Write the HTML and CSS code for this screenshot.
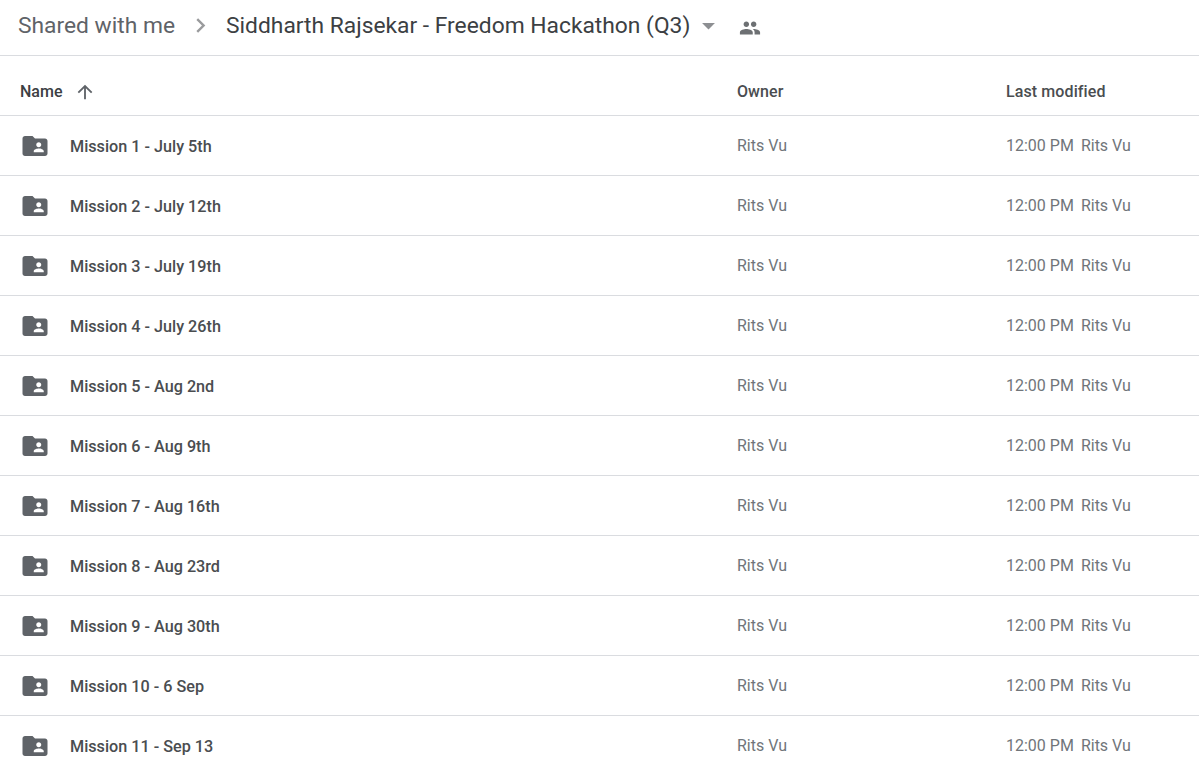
FILE: index.html
```html
<!DOCTYPE html>
<html lang="en">
<head>
  <meta charset="UTF-8" />
  <title>Siddharth Rajsekar - Freedom Hackathon (Q3)</title>
  <link rel="stylesheet" href="styles.css">
</head>

<body>
  <svg class="icon-defs" width="0" height="0">
    <symbol id="shared-folder" viewBox="0 0 24 24">
      <path d="M20 6h-8l-2-2H4c-1.1 0-2 .9-2 2v12c0 1.1.9 2 2 2h16c1.1 0 2-.9 2-2V8c0-1.1-.9-2-2-2zm-5 3c1.1 0 2 .9 2 2s-.9 2-2 2-2-.9-2-2 .9-2 2-2zm4 8h-8v-1c0-1.33 2.67-2 4-2s4 .67 4 2v1z"/>
    </symbol>
  </svg>

  <header class="crumbs">
    <span class="crumb-parent">Shared with me</span>
    <svg class="crumb-sep" viewBox="0 0 24 24"><path d="M8.6 16.6 13.2 12 8.6 7.4 10 6l6 6-6 6z"/></svg>
    <span class="crumb-current">Siddharth Rajsekar - Freedom Hackathon (Q3)</span>
    <svg class="crumb-caret" viewBox="0 0 24 24"><path d="M7 10l5 5 5-5z"/></svg>
    <svg class="crumb-people" viewBox="0 0 24 24"><path d="M16 11c1.66 0 2.99-1.34 2.99-3S17.66 5 16 5s-3 1.34-3 3 1.34 3 3 3zm-8 0c1.66 0 2.99-1.34 2.99-3S9.66 5 8 5 5 6.34 5 8s1.34 3 3 3zm0 2c-2.33 0-7 1.17-7 3.5V19h14v-2.5C15 14.17 10.33 13 8 13zm8 0c-.29 0-.62.02-.97.05 1.16.84 1.97 1.97 1.97 3.45V19h6v-2.5c0-2.33-4.67-3.5-7-3.5z"/></svg>
  </header>

  <div class="file-list">
    <div class="list-head">
      <div class="col-name">
        Name
        <svg class="sort-arrow" viewBox="0 0 24 24"><path d="M4 12l1.41 1.41L11 7.83V20h2V7.83l5.58 5.59L20 12l-8-8-8 8z"/></svg>
      </div>
      <div class="col-owner">Owner</div>
      <div class="col-modified">Last modified</div>
    </div>

    <div class="row">
      <div class="col-name"><svg class="folder"><use href="#shared-folder"/></svg>Mission 1 - July 5th</div>
      <div class="col-owner">Rits Vu</div>
      <div class="col-modified"><span class="time">12:00 PM</span>Rits Vu</div>
    </div>
    <div class="row">
      <div class="col-name"><svg class="folder"><use href="#shared-folder"/></svg>Mission 2 - July 12th</div>
      <div class="col-owner">Rits Vu</div>
      <div class="col-modified"><span class="time">12:00 PM</span>Rits Vu</div>
    </div>
    <div class="row">
      <div class="col-name"><svg class="folder"><use href="#shared-folder"/></svg>Mission 3 - July 19th</div>
      <div class="col-owner">Rits Vu</div>
      <div class="col-modified"><span class="time">12:00 PM</span>Rits Vu</div>
    </div>
    <div class="row">
      <div class="col-name"><svg class="folder"><use href="#shared-folder"/></svg>Mission 4 - July 26th</div>
      <div class="col-owner">Rits Vu</div>
      <div class="col-modified"><span class="time">12:00 PM</span>Rits Vu</div>
    </div>
    <div class="row">
      <div class="col-name"><svg class="folder"><use href="#shared-folder"/></svg>Mission 5 - Aug 2nd</div>
      <div class="col-owner">Rits Vu</div>
      <div class="col-modified"><span class="time">12:00 PM</span>Rits Vu</div>
    </div>
    <div class="row">
      <div class="col-name"><svg class="folder"><use href="#shared-folder"/></svg>Mission 6 - Aug 9th</div>
      <div class="col-owner">Rits Vu</div>
      <div class="col-modified"><span class="time">12:00 PM</span>Rits Vu</div>
    </div>
    <div class="row">
      <div class="col-name"><svg class="folder"><use href="#shared-folder"/></svg>Mission 7 - Aug 16th</div>
      <div class="col-owner">Rits Vu</div>
      <div class="col-modified"><span class="time">12:00 PM</span>Rits Vu</div>
    </div>
    <div class="row">
      <div class="col-name"><svg class="folder"><use href="#shared-folder"/></svg>Mission 8 - Aug 23rd</div>
      <div class="col-owner">Rits Vu</div>
      <div class="col-modified"><span class="time">12:00 PM</span>Rits Vu</div>
    </div>
    <div class="row">
      <div class="col-name"><svg class="folder"><use href="#shared-folder"/></svg>Mission 9 - Aug 30th</div>
      <div class="col-owner">Rits Vu</div>
      <div class="col-modified"><span class="time">12:00 PM</span>Rits Vu</div>
    </div>
    <div class="row">
      <div class="col-name"><svg class="folder"><use href="#shared-folder"/></svg>Mission 10 - 6 Sep</div>
      <div class="col-owner">Rits Vu</div>
      <div class="col-modified"><span class="time">12:00 PM</span>Rits Vu</div>
    </div>
    <div class="row">
      <div class="col-name"><svg class="folder"><use href="#shared-folder"/></svg>Mission 11 - Sep 13</div>
      <div class="col-owner">Rits Vu</div>
      <div class="col-modified"><span class="time">12:00 PM</span>Rits Vu</div>
    </div>
  </div>
</body>
</html>
```

FILE: styles.css
```css
html {
  overflow: hidden;
}

body {
  margin: 0;
  background: white;
  color: #3c4043;
  font-family: Roboto, sans-serif;
  font-size: 16px;
}

.icon-defs {
  display: block;
}

/* styling for the breadcrumb bar */
.crumbs {
  display: flex;
  align-items: center;
  height: 51px;
  padding-left: 18px;
  padding-bottom: 4px;
  border-bottom: 1px solid #dadce0;
  font-size: 22.8px;
}

.crumb-parent {
  color: #5f6368;
}

.crumb-sep {
  width: 29px;
  height: 29px;
  margin-left: 11px;
  margin-right: 11px;
  fill: #9a9b9d;
}

.crumb-current {
  color: #3c4043;
}

.crumb-caret {
  width: 31px;
  height: 31px;
  margin-left: 3px;
  fill: #8d8f92;
}

.crumb-people {
  width: 22px;
  height: 22px;
  margin-left: 15px;
  margin-top: 4px;
  fill: #6d7073;
}

/* styling for the file list */
.list-head,
.row {
  display: flex;
  align-items: center;
  height: 59px;
  border-bottom: 1px solid #dadce0;
}

.list-head {
  height: 47px;
  padding-top: 12px;
  font-weight: 500;
}

.col-name {
  display: flex;
  align-items: center;
  width: 737px;
  flex: none;
  box-sizing: border-box;
  padding-left: 20px;
  font-weight: 500;
}

.row .col-name {
  padding-top: 2px;
  font-size: 16.2px;
  color: #4a4d50;
}

.col-owner {
  width: 269px;
  flex: none;
}

.col-modified {
  flex: 1;
}

.list-head .col-owner,
.list-head .col-modified {
  letter-spacing: 0.1px;
  color: #4a4d50;
}

.row .col-owner,
.row .col-modified {
  color: #70757a;
  font-weight: 400;
  margin-top: -1px;
}

.sort-arrow {
  width: 22px;
  height: 22px;
  margin-left: 12px;
  fill: #5f6368;
}

.folder {
  width: 30px;
  height: 30px;
  margin-right: 20px;
  margin-bottom: 2px;
  fill: #5f6368;
}

.time {
  margin-right: 7px;
}
```
